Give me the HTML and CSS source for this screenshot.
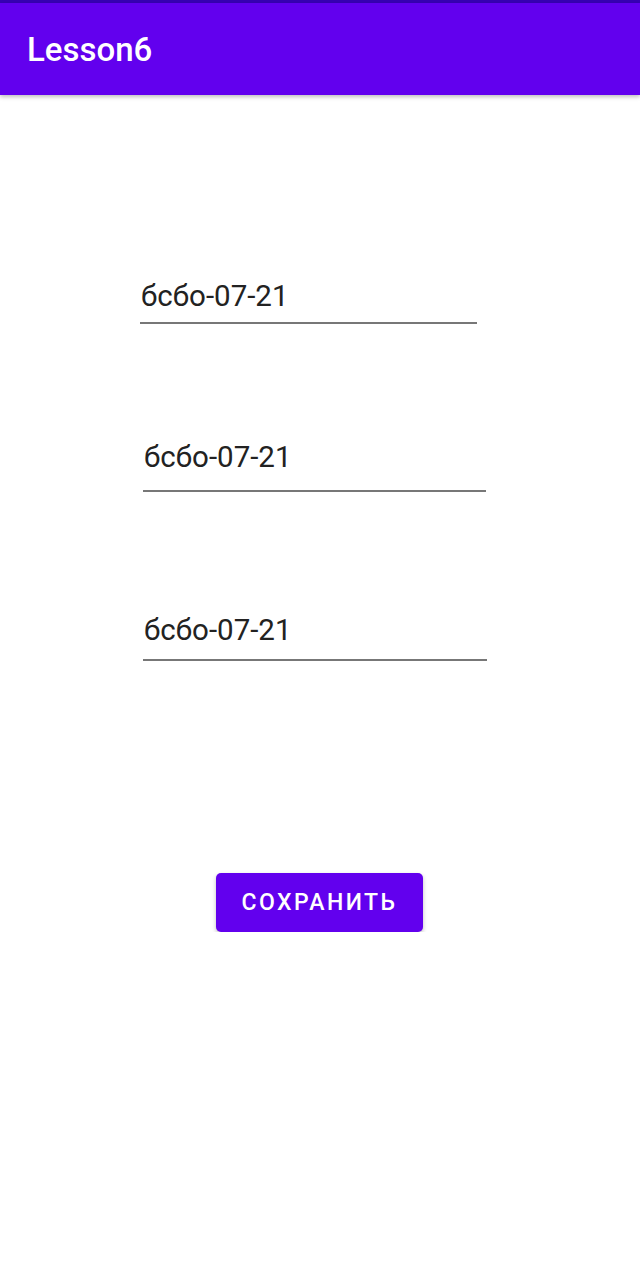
FILE: index.html
```html
<!DOCTYPE html>
<html>
<head>
<meta charset="utf-8">
<link rel="stylesheet" href="styles.css">
</head>
<body>
<div class="status"></div>
<header class="appbar"><h1 class="title">Lesson6</h1></header>
<main class="content">
  <div class="field f1"><span class="value">бсбо-07-21</span></div>
  <div class="field f2"><span class="value">бсбо-07-21</span></div>
  <div class="field f3"><span class="value">бсбо-07-21</span></div>
  <div class="btnrow"><button class="btn">СОХРАНИТЬ</button></div>
</main>
</body>
</html>
```
FILE: styles.css
```css
html, body {
  margin: 0;
  padding: 0;
  background: #ffffff;
  font-family: Roboto, "Noto Sans", sans-serif;
}
.status {
  height: 3px;
  background: #3700b3;
}
.appbar {
  height: 92px;
  background: #6200ee;
  display: flex;
  align-items: center;
  padding-left: 27px;
  box-shadow: 0 2px 4px rgba(0,0,0,0.25);
  position: relative;
}
.title {
  margin: 0;
  color: #ffffff;
  font-size: 33px;
  font-weight: 500;
  line-height: 1;
}
.content {
  display: flex;
  flex-direction: column;
}
.field {
  border-bottom: 2px solid #777777;
  display: flex;
  align-items: flex-end;
}
.value {
  font-size: 29.5px;
  color: #222222;
  line-height: 1;
  padding-bottom: 12px;
  padding-left: 1px;
}
.f1 { margin-top: 187px; margin-left: 140px; width: 337px; }
.f1 .value { padding-bottom: 10px; }
.f2 { margin-top: 119px; margin-left: 143px; width: 343px; }
.f2 .value { padding-bottom: 18px; }
.f3 { margin-top: 124px; margin-left: 143px; width: 344px; }
.f3 .value { padding-bottom: 13px; }
.btnrow {
  display: flex;
  margin-top: 212px;
  padding-left: 216px;
}
.btn {
  width: 207px;
  height: 59px;
  background: #6200ee;
  color: #ffffff;
  border: none;
  border-radius: 5px;
  font-family: Roboto, sans-serif;
  font-weight: 500;
  font-size: 23px;
  letter-spacing: 2.4px;
  box-shadow: 0 2px 4px rgba(0,0,0,0.25);
  padding: 0;
}
```
